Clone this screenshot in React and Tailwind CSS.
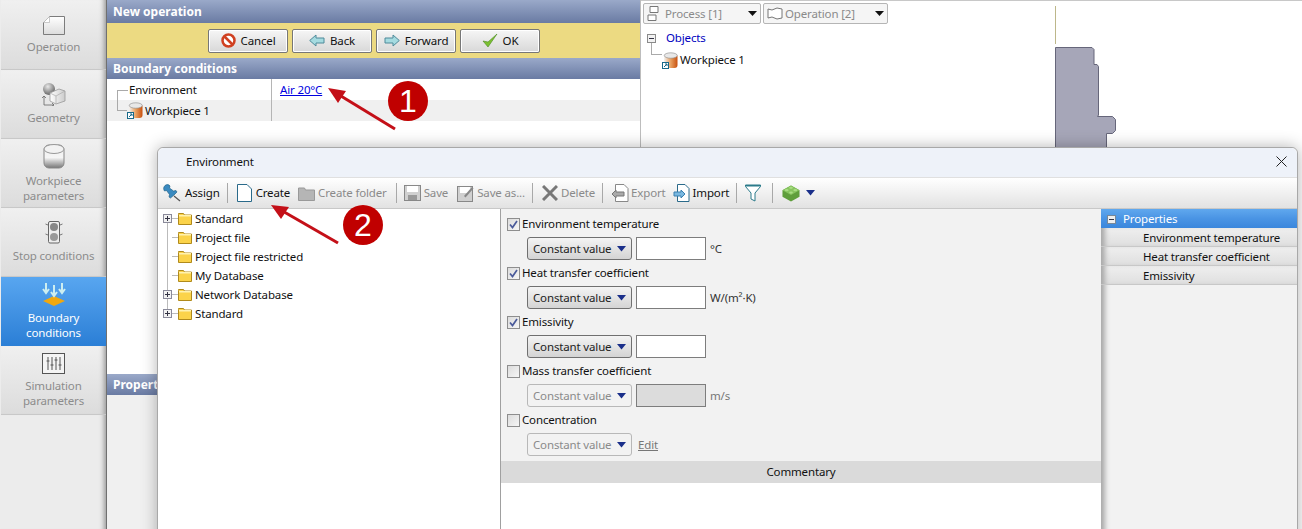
import React from "react";

const font = "font-['Noto_Sans',sans-serif]";
const header = "bg-gradient-to-b from-[#9aa9c9] to-[#6a7ba3] text-white font-bold text-[12px] tracking-normal flex items-center pl-[6px]";

function SideItem({ label, active, h, icon }) {
  return (
    <div className={`flex flex-col items-center justify-center gap-[4px] border-b ${h} ${active ? "bg-gradient-to-b from-[#58a6f0] to-[#2b7fd6] text-white border-[#2b7fd6]" : "bg-gradient-to-b from-[#f0f0f0] to-[#dcdcdc] text-[#8c8c8c] border-[#c8c8c8] shadow-[inset_-7px_0_5px_-5px_#999]"}`}>
      <div className="flex items-center justify-center">{icon}</div>
      <div className="text-center leading-[15px] whitespace-pre-line">{label}</div>
    </div>
  );
}

const Folder = () => (
  <svg width="14" height="13" viewBox="0 0 14 13" className="shrink-0">
    <path d="M.5 2.500V1.500h5l1 1.500h7v9.500H.5z" fill="#fbd34a" stroke="#b08a1c" />
    <rect x="1" y="3" width="12" height="1.500" fill="#fff2b0" />
  </svg>
);

const Plus = () => (
  <svg width="9" height="9" viewBox="0 0 9 9" className="shrink-0">
    <rect x=".5" y=".5" width="8" height="8" fill="#f2f2f2" stroke="#8a8a9a" />
    <path d="M2 4.500h5M4.500 2v5" stroke="#334" />
  </svg>
);

const Workpiece = () => (
  <svg width="16" height="17" viewBox="0 0 16 17" className="shrink-0">
    <defs>
      <linearGradient id="wp" x1="0" x2="1"><stop offset="0" stopColor="#f3f3f3" /><stop offset=".5" stopColor="#e8a060" /><stop offset="1" stopColor="#c8500f" /></linearGradient>
    </defs>
    <rect x="2" y="2" width="13.500" height="14" rx="3" fill="url(#wp)" />
    <ellipse cx="8.750" cy="3.500" rx="6.500" ry="2.700" fill="#e8e8e8" stroke="#888" strokeWidth=".6" />
    <rect x=".5" y="10.500" width="6" height="6" fill="#fff" stroke="#1a6a8a" />
    <path d="M2 15l3-3M3 12h2v2" stroke="#1a6a8a" fill="none" />
  </svg>
);

function Btn({ icon, label }) {
  return (
    <div className="w-[80px] h-[24px] flex items-center justify-center gap-[5px] rounded-[2px] border border-[#777] bg-gradient-to-b from-[#f6f6f6] to-[#d8d8d8] text-[#111] shadow-[inset_0_0_0_1px_#fff]">
      {icon}<span>{label}</span>
    </div>
  );
}

const ArrowL = () => (
  <svg width="16" height="13" viewBox="0 0 16 13"><path d="M.7 6.500L7 1v3h8v5H7v3z" fill="#a5dbe0" stroke="#4f8a9a" /></svg>
);
const ArrowR = () => (
  <svg width="16" height="13" viewBox="0 0 16 13"><path d="M15.300 6.500L9 1v3H1v5h8v3z" fill="#a5dbe0" stroke="#4f8a9a" /></svg>
);

function TB({ icon, label, dim, className = "gap-[3px]" }) {
  return (
    <div className={`flex items-center ${className} ${dim ? "text-[#8a8a8a]" : "text-[#111]"}`}>
      {icon}{label && <span>{label}</span>}
    </div>
  );
}
const Sep = ({ className = "" }) => <div className={`w-px h-[20px] bg-[#a8a8a8] ${className}`} />;

function Sel({ dim }) {
  return (
    <div className={`w-[105px] h-[23px] rounded-[3px] border flex items-center justify-between pl-[5px] pr-[5px] whitespace-nowrap ${dim ? "border-[#b8b8b8] bg-[#f2f2f2] text-[#8a8a8a]" : "border-[#707070] bg-gradient-to-b from-[#f4f4f4] to-[#d4d4d4] text-[#222]"}`}>
      <span>Constant value</span>
      <svg width="9" height="6" viewBox="0 0 9 6"><path d="M0 0h9L4.500 5.500z" fill="#1a2f8a" /></svg>
    </div>
  );
}

function Check({ on }) {
  return (
    <div className="w-[13px] h-[13px] border border-[#8e8e8e] bg-gradient-to-br from-[#dcdcdc] to-[#f6f6f6] flex items-center justify-center shrink-0">
      {on && <svg width="9" height="9" viewBox="0 0 9 9"><path d="M1 4.500l2.500 3L8 1" fill="none" stroke="#4a5a9a" strokeWidth="1.700" /></svg>}
    </div>
  );
}

function Prop({ on, label, dim, unit, input = true, edit }) {
  return (
    <div className="h-[49px] pl-[6px]">
      <div className="h-[18px] mt-[6px] flex items-center gap-[2px] text-[#111]"><Check on={on} /><span>{label}</span></div>
      <div className="mt-[4px] ml-[20px] flex items-center gap-[4px]">
        <Sel dim={dim} />
        {input && <div className={`w-[70px] h-[23px] border border-[#7d7d7d] ${dim ? "bg-[#dcdcdc]" : "bg-white"}`} />}
        {unit && <span className={`${dim ? "text-[#777]" : "text-[#333]"}`}>{unit}</span>}
        {edit && <span className="ml-[2px] underline text-[#777]">Edit</span>}
      </div>
    </div>
  );
}

function TreeRow({ plus, label, first, last }) {
  return (
    <div className="h-[19px] flex items-center text-[#111]">
      {plus ? (
        <div className="w-[9px] h-full flex flex-col items-center">
          <div className={`w-px h-[5px] ${first ? "" : "bg-[#bbb]"}`} />
          <Plus />
          <div className={`w-px h-[5px] ${last ? "" : "bg-[#bbb]"}`} />
        </div>
      ) : (
        <div className="w-[9px] h-full flex justify-center"><div className="w-px h-full bg-[#bbb]" /></div>
      )}
      <div className="w-[6px] h-px bg-[#bbb]" />
      <Folder />
      <span className="ml-[3px]">{label}</span>
    </div>
  );
}

function Annot({ n, className }) {
  return (
    <div className={`absolute w-[40px] h-[40px] rounded-full bg-[#c00000] text-white flex items-center justify-center text-[32px] tracking-normal font-['Liberation_Sans',sans-serif] ${className}`}>{n}</div>
  );
}

export default function App() {
  return (
    <div className={`relative w-[1302px] h-[529px] overflow-hidden bg-white flex text-[11.5px] tracking-[-0.15px] ${font}`}>
      {/* sidebar */}
      <div className="w-[107px] shrink-0 flex flex-col bg-[#ececec] border-r border-[#707070] pl-px">
        <SideItem h="h-[70px]" label="Operation" icon={<svg width="22" height="19" viewBox="0 0 22 19"><defs><linearGradient id="op" x1="0" y1="0" x2="0" y2="1"><stop offset="0" stopColor="#fff" /><stop offset="1" stopColor="#dcdcdc" /></linearGradient></defs><path d="M.5 6.500L6.500.5h15v18H.5z" fill="url(#op)" stroke="#7c7c7c" /><path d="M.5 6.500h6v-6" fill="#fff" stroke="#aaa" strokeWidth=".6" /></svg>} />
        <SideItem h="h-[69px]" label="Geometry" icon={<svg width="24" height="23" viewBox="0 0 24 23"><defs><radialGradient id="ball" cx=".4" cy=".3" r=".8"><stop offset="0" stopColor="#e8e8e8" /><stop offset="1" stopColor="#555" /></radialGradient><linearGradient id="cube" x1="0" x2="1"><stop offset="0" stopColor="#fff" /><stop offset="1" stopColor="#ccc" /></linearGradient></defs><circle cx="7" cy="6" r="6" fill="url(#ball)" /><path d="M8 10l9-4 6 2v10l-9 3-6-3z" fill="url(#cube)" stroke="#999" strokeWidth=".8" /><path d="M8 10l6 3 9-5M14 13v8" fill="none" stroke="#aaa" strokeWidth=".7" /><path d="M2 13v9h10M0 15l2-2 2 2M10 20l2 2-2 1" fill="none" stroke="#666" strokeWidth=".8" /></svg>} />
        <SideItem h="h-[69px]" label={"Workpiece\nparameters"} icon={<svg width="22" height="26" viewBox="0 0 22 26"><defs><linearGradient id="c" x1="0" y1="0" x2="0" y2="1"><stop offset="0" stopColor="#eee" /><stop offset=".55" stopColor="#f5f5f5" /><stop offset="1" stopColor="#777" /></linearGradient></defs><rect x="1" y="2" width="20" height="23" rx="5" fill="url(#c)" stroke="#888" /><ellipse cx="11" cy="6" rx="10" ry="4.500" fill="#f2f2f2" stroke="#999" /></svg>} />
        <SideItem h="h-[69px]" label="Stop conditions" icon={<svg width="18" height="23" viewBox="0 0 18 23"><rect x="3.500" y=".5" width="11" height="21.500" rx="1.500" fill="#eee" stroke="#666" /><circle cx="9" cy="6" r="4" fill="#888" /><circle cx="9" cy="16" r="4" fill="#999" /><path d="M3 4L.5 3M3 14l-2.500-1M15 4l2.500-1M15 14l2.500-1" stroke="#777" /></svg>} />
        <SideItem active h="h-[69px]" label={"Boundary\nconditions"} icon={<svg width="24" height="24" viewBox="0 0 24 24"><path d="M12 14l11 5-11 5L1 19z" fill="#f0a810" /><path d="M4 1v9M12 3v11M20 1v9M1 7l3 4 3-4M9 10l3 4 3-4M17 7l3 4 3-4" fill="none" stroke="#cdeef0" strokeWidth="2" /></svg>} />
        <SideItem h="h-[69px]" label={"Simulation\nparameters"} icon={<svg width="23" height="21" viewBox="0 0 23 21"><rect x=".5" y=".5" width="22" height="20" fill="#f4f4f4" stroke="#555" /><path d="M6 4v13M10 4v13M14 4v13M18 4v13M4.500 8h3M8.500 12h3M12.500 7h3M16.500 12h3" stroke="#555" /></svg>} />
        <div className="flex-1 shadow-[inset_-7px_0_5px_-5px_#999]" />
      </div>

      {/* middle */}
      <div className="w-[534px] shrink-0 flex flex-col border-r border-[#bdbdbd]">
        <div className={`h-[23px] shrink-0 ${header}`}>New operation</div>
        <div className="h-[35px] shrink-0 bg-[#ecda82] flex items-center pl-[101px] gap-[4px]">
          <Btn label="Cancel" icon={<svg width="15" height="15" viewBox="0 0 15 15"><circle cx="7.500" cy="7.500" r="6" fill="#fff" stroke="#d04020" strokeWidth="2.500" /><path d="M3.500 3.500l8 8" stroke="#d04020" strokeWidth="2.500" /></svg>} />
          <Btn label="Back" icon={<ArrowL />} />
          <Btn label="Forward" icon={<ArrowR />} />
          <Btn label="OK" icon={<svg width="16" height="15" viewBox="0 0 16 15"><path d="M1 8l5 6 9-13-9 8z" fill="#7cc030" stroke="#4a8a20" strokeWidth=".6" /></svg>} />
        </div>
        <div className={`h-[21px] shrink-0 ${header}`}>Boundary conditions</div>
        <div className="h-[21px] shrink-0 flex">
          <div className="w-[165px] border-r border-[#b5b5b5] pl-[10px] flex items-center text-[#111]">
            <div className="w-[11px] h-[10px] self-end border-l border-t border-[#aaa] mr-[1px]" />Environment
          </div>
          <div className="flex items-center pl-[8px] text-[#0000e0] underline">Air 20°C</div>
        </div>
        <div className="h-[21px] shrink-0 flex bg-[#f0f0f0]">
          <div className="w-[165px] border-r border-[#b5b5b5] pl-[10px] flex items-center text-[#111]">
            <div className="w-[10px] h-[11px] self-start border-l border-b border-[#aaa]" />
            <Workpiece /><span className="ml-[2px]">Workpiece 1</span>
          </div>
        </div>
        <div className="flex-1" />
        <div className={`h-[21px] shrink-0 ${header}`}>Properties</div>
        <div className="h-[134px] shrink-0 bg-[#f0f0f0]" />
      </div>

      {/* right */}
      <div className="flex-1 flex flex-col border-t border-[#c8c8c8]">
        <div className="flex gap-[2px] pl-[2px] pt-[2px]">
          <div className="w-[118px] h-[21px] border border-[#b5b5b5] rounded-[2px] bg-[#f5f5f5] flex items-center justify-between px-[3px] text-[#8a8a8a]">
            <span className="flex items-center gap-[4px]"><svg width="14" height="15" viewBox="0 0 14 15"><path d="M3 .5h8v6H3zM1 9h8v5.500H1z" fill="#fff" stroke="#777" /></svg>Process [1]</span>
            <svg width="9" height="5" viewBox="0 0 9 5"><path d="M0 0h9L4.500 5z" fill="#111" /></svg>
          </div>
          <div className="w-[125px] h-[21px] border border-[#b5b5b5] rounded-[2px] bg-[#f5f5f5] flex items-center justify-between px-[3px] text-[#8a8a8a]">
            <span className="flex items-center gap-[2px]"><svg width="16" height="13" viewBox="0 0 16 13"><path d="M1 2l4 1 5-2 5 1v9l-5 1-5-2-4 1z" fill="#fff" stroke="#777" /></svg>Operation [2]</span>
            <svg width="9" height="5" viewBox="0 0 9 5"><path d="M0 0h9L4.500 5z" fill="#111" /></svg>
          </div>
        </div>
        <div className="pl-[6px] mt-[3px] h-[22px] flex items-center">
          <svg width="9" height="9" viewBox="0 0 9 9"><rect x=".5" y=".5" width="8" height="8" fill="#f2f2f2" stroke="#8a8a8a" /><path d="M2 4.500h5" stroke="#334" /></svg>
          <span className="ml-[10px] text-[#0000c0]">Objects</span>
        </div>
        <div className="pl-[10px] h-[22px] flex items-center text-[#111]">
          <div className="w-[10px] h-[11px] self-start border-l border-b border-[#aaa] -mt-[6px] box-content" />
          <Workpiece /><span className="ml-[2px]">Workpiece 1</span>
        </div>
      </div>

      {/* free canvas drawing */}
      <svg className="absolute left-[1054px] top-[0px]" width="70" height="148" viewBox="0 0 70 148">
        <path d="M1.500 6v38" stroke="#bdb78a" />
        <path d="M1.500 47.500H38l2 2v15h3l1.500 2V115l-1 1.500h15l3 3v11l-3 3h-6V148H1.500z" fill="#a6a6b8" stroke="#66667a" />
      </svg>

      {/* dialog */}
      <div className="absolute left-[157px] top-[147px] w-[1141px] h-[400px] bg-white rounded-t-[6px] border border-[#a8a8a8] shadow-[0_0_16px_rgba(0,0,0,0.3)] flex flex-col">
        <div className="h-[30px] shrink-0 bg-[#eef2f9] rounded-t-[6px] border-b border-[#e0e0e0] flex items-center justify-between pl-[28px] pr-[10px] pb-[2px] text-[#111]">
          <span>Environment</span>
          <svg width="11" height="11" viewBox="0 0 11 11"><path d="M.5.5l10 10M10.500.5l-10 10" stroke="#222" /></svg>
        </div>
        <div className="h-[31px] shrink-0 bg-gradient-to-b from-white to-[#e2e2e2] border-b border-[#c8c8c8] flex items-center gap-[7px] pl-[5px]">
          <TB className="gap-[4px]" label="Assign" icon={<svg width="18" height="18" viewBox="0 0 18 18"><path d="M2 1.500c2-1.500 4-1 5 .5l-.5 2 4 3 2.500-.5 1 1.500-3 3-3.500 3-1.500-1 .5-2.500-3-4-2 .5C.5 5.500 0 3.500 2 1.500z" fill="#3a8ac0" stroke="#1a5a80" strokeWidth=".6" /><path d="M11 12l6 5" stroke="#555" strokeWidth="1.200" /></svg>} />
          <Sep />
          <TB className="gap-[4px] ml-[2px]" label="Create" icon={<svg width="15" height="18" viewBox="0 0 15 18"><path d="M.5.5H10l4.500 4.500v12.500H.5z" fill="#fff" stroke="#2a6a8a" /></svg>} />
          <TB className="gap-[3px] ml-[1px]" dim label="Create folder" icon={<svg width="17" height="15" viewBox="0 0 17 15"><path d="M.5 2h6l1 2h9v10.500H.5z" fill="#b5b5b5" stroke="#999" /></svg>} />
          <Sep className="ml-[2px]" />
          <TB dim label="Save" icon={<svg width="17" height="16" viewBox="0 0 17 16"><rect x=".5" y=".5" width="16" height="15" fill="#d0d0d0" stroke="#888" /><rect x="3" y="1" width="11" height="6" fill="#fff" /><rect x="4" y="10" width="9" height="5" fill="#999" /></svg>} />
          <TB className="gap-[3px] ml-[2px]" dim label="Save as..." icon={<svg width="17" height="17" viewBox="0 0 17 17"><rect x=".5" y="1.500" width="15" height="15" fill="#d0d0d0" stroke="#888" /><rect x="3" y="2" width="10" height="6" fill="#fff" /><path d="M7 11l8-9 1.500 1.500-8 9z" fill="#888" /></svg>} />
          <Sep />
          <TB className="gap-[3px] ml-[2px]" dim label="Delete" icon={<svg width="16" height="16" viewBox="0 0 16 16"><path d="M1 1l14 14M15 1L1 15" stroke="#777" strokeWidth="3" /></svg>} />
          <Sep />
          <TB className="gap-[2px] ml-[1px]" dim label="Export" icon={<svg width="18" height="18" viewBox="0 0 18 18"><path d="M4.500.5H13l4 4v13H4.500z" fill="#fff" stroke="#888" /><path d="M1 10l4-4v2h8v4H5v2z" fill="#aaa" stroke="#777" /></svg>} />
          <TB className="gap-[3px]" label="Import" icon={<svg width="17" height="18" viewBox="0 0 17 18"><path d="M4.500.5H12l4 4v13H4.500z" fill="#fff" stroke="#2a6a8a" /><path d="M12 10L8 6v2H1v4h7v2z" fill="#7ab8e0" stroke="#3a80b0" /></svg>} />
          <Sep />
          <svg className="ml-[1px]" width="16" height="18" viewBox="0 0 16 18"><path d="M.5 1h15v1.500L10 9v8l-4-2V9L.5 2.500z" fill="#fff" stroke="#2a7a8a" /><path d="M.5 1h15v1.500H.5z" fill="#2a7a8a" /></svg>
          <Sep className="ml-[4px]" />
          <div className="flex items-center gap-[6px] ml-[2px]">
            <svg width="18" height="18" viewBox="0 0 19 18"><path d="M9.500 1l9 5v7l-9 5-9-5V6z" fill="#5f9e3c" /><path d="M9.500 1l9 5-9 5-9-5z" fill="#86c45e" /><ellipse cx="9.500" cy="3.500" rx="2" ry="1.200" fill="#a9dc84" /><ellipse cx="5" cy="6" rx="2" ry="1.200" fill="#a9dc84" /><ellipse cx="14" cy="6" rx="2" ry="1.200" fill="#a9dc84" /><ellipse cx="9.500" cy="8.500" rx="2" ry="1.200" fill="#a9dc84" /></svg>
            <svg width="9" height="6" viewBox="0 0 9 6"><path d="M0 0h9L4.500 5.500z" fill="#1a2f8a" /></svg>
          </div>
        </div>
        <div className="flex-1 flex min-h-0">
          <div className="w-[343px] shrink-0 bg-white border-r border-[#a0a0a0] pl-[5px]">
            <TreeRow plus first label="Standard" />
            <TreeRow label="Project file" />
            <TreeRow label="Project file restricted" />
            <TreeRow label="My Database" />
            <TreeRow plus label="Network Database" />
            <TreeRow plus last label="Standard" />
          </div>
          <div className="w-[600px] shrink-0 flex flex-col bg-[#f2f2f2]">
            <Prop on label="Environment temperature" unit="°C" />
            <Prop on label="Heat transfer coefficient" unit="W/(m²·K)" />
            <Prop on label="Emissivity" />
            <Prop dim label="Mass transfer coefficient" unit="m/s" />
            <Prop dim label="Concentration" input={false} edit />
            <div className="h-[22px] shrink-0 mt-[7px] bg-[#dadada] flex items-center justify-center text-[#111]">Commentary</div>
            <div className="flex-1 bg-white" />
          </div>
          <div className="flex-1 bg-[#f2f2f2] shadow-[inset_7px_0_5px_-3px_#aaa]">
            <div className="h-[19px] pt-[1px] bg-gradient-to-b from-[#60a8ee] via-[#4a94e4] to-[#3a86dc] flex items-center pl-[6px] gap-[7px] text-white">
              <svg width="9" height="9" viewBox="0 0 9 9"><rect x=".5" y=".5" width="8" height="8" fill="#eee" stroke="#789" /><path d="M2 4.500h5" stroke="#334" /></svg>Properties
            </div>
            {["Environment temperature", "Heat transfer coefficient", "Emissivity"].map((t) => (
              <div key={t} className="h-[19px] pt-[1px] bg-gradient-to-b from-[#efefef] to-[#dfdfdf] border-b border-[#c8c8c8] pl-[42px] flex items-center text-[#111] shadow-[inset_7px_0_5px_-3px_#aaa]">{t}</div>
            ))}
          </div>
        </div>
      </div>

      {/* annotations */}
      <Annot n="1" className="left-[388px] top-[81px]" />
      <Annot n="2" className="left-[343px] top-[205px]" />
      <svg className="absolute left-0 top-0 pointer-events-none" width="1302" height="529" viewBox="0 0 1302 529">
        <path d="M395 129L336 93" stroke="#c41018" strokeWidth="3" />
        <path d="M328 88l18 3-8 12z" fill="#c41018" />
        <path d="M338 243L279 209" stroke="#c41018" strokeWidth="3" />
        <path d="M271 205l18 2-8 12z" fill="#c41018" />
      </svg>
    </div>
  );
}
